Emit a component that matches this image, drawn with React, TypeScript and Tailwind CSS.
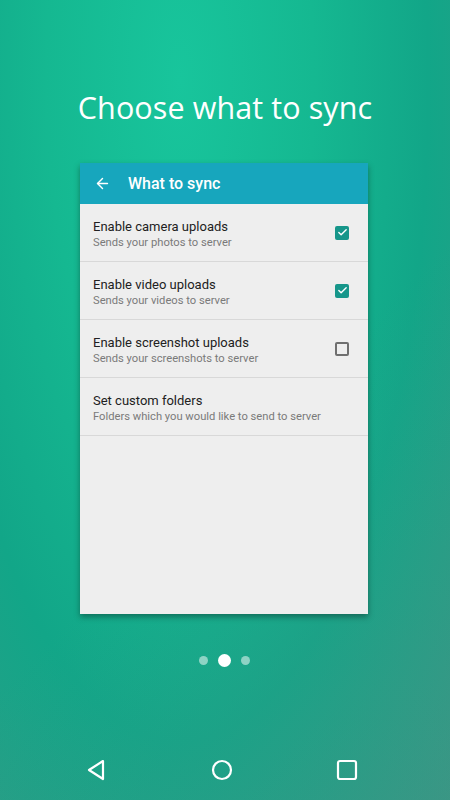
import { ArrowLeft, Check } from "lucide-react";

const rows = [
    { title: "Enable camera uploads", sub: "Sends your photos to server", box: true, checked: true },
    { title: "Enable video uploads", sub: "Sends your videos to server", box: true, checked: true },
    { title: "Enable screenshot uploads", sub: "Sends your screenshots to server", box: true, checked: false },
    { title: "Set custom folders", sub: "Folders which you would like to send to server", box: false, checked: false },
];

const App = () => {
    return (
        <div className="w-[450px] h-[800px] relative overflow-hidden flex flex-col bg-[radial-gradient(ellipse_at_40%_10%,#18c59c_0%,#15b891_35%,#12a688_65%,#2f9c86_100%)]">
            <div className="absolute inset-0 bg-[linear-gradient(135deg,transparent_55%,rgba(80,140,130,0.35)_100%)] pointer-events-none"></div>

            <div className="relative z-10 flex flex-col items-center h-full">
                <h1 className="mt-[85px] h-[44px] leading-[44px] text-[30.5px] text-white font-['Open_Sans',sans-serif] font-normal tracking-[0.1px]">
                    Choose what to sync
                </h1>

                <div className="mt-[34px] mr-[2px] w-[288px] h-[451px] bg-[#eeeeee] shadow-[0_3px_6px_rgba(0,0,0,0.35)] flex flex-col font-['Roboto',sans-serif]">
                    <div className="h-[41px] bg-[#17a6bd] flex items-center px-[14px] shrink-0">
                        <ArrowLeft className="w-[17px] h-[17px] text-white" strokeWidth={2} />
                        <span className="ml-[17px] text-white text-[16px] font-medium">What to sync</span>
                    </div>
                    {rows.map((r) => (
                        <div key={r.title} className="h-[58px] border-b border-[#d8d8d8] flex items-center pl-[13px] pr-[19px]">
                            <div className="flex-1 flex flex-col pt-[2px]">
                                <span className="text-[13px] leading-[17px] text-[#212121]">{r.title}</span>
                                <span className="text-[11.2px] leading-[15px] text-[#7a7a7a]">{r.sub}</span>
                            </div>
                            {r.box &&
                                (r.checked ? (
                                    <div className="w-[14px] h-[14px] rounded-[2px] bg-[#16968a] flex items-center justify-center">
                                        <Check className="w-[11px] h-[11px] text-white" strokeWidth={3} />
                                    </div>
                                ) : (
                                    <div className="w-[14px] h-[14px] rounded-[2px] border-2 border-[#6f6f6f]"></div>
                                ))}
                        </div>
                    ))}
                </div>

                <div className="mt-[40px] mr-[2px] flex items-center gap-[10px]">
                    <div className="w-[9px] h-[9px] rounded-full bg-white/50"></div>
                    <div className="w-[13px] h-[13px] rounded-full bg-white"></div>
                    <div className="w-[9px] h-[9px] rounded-full bg-white/50"></div>
                </div>

                <div className="mt-auto w-full h-[60px] flex items-center justify-between pl-[85px] pr-[92px]">
                    <svg width="22" height="22" viewBox="0 0 22 22" fill="none" stroke="white" strokeWidth="2.2" strokeLinejoin="round">
                        <path d="M18 2 L4 11 L18 20 Z" />
                    </svg>
                    <svg width="22" height="22" viewBox="0 0 22 22" fill="none" stroke="white" strokeWidth="2.2">
                        <circle cx="11" cy="11" r="9" />
                    </svg>
                    <svg width="22" height="22" viewBox="0 0 22 22" fill="none" stroke="white" strokeWidth="2.2">
                        <rect x="2" y="2" width="18" height="18" rx="2" />
                    </svg>
                </div>
            </div>
        </div>
    );
};

export default App;
